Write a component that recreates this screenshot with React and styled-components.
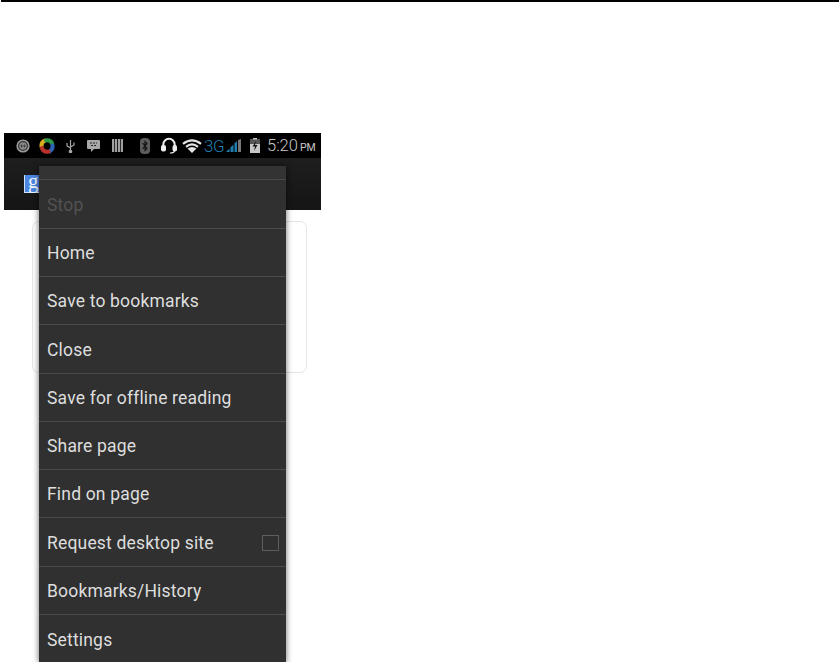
import React from "react";
import styled, { createGlobalStyle } from "styled-components";

const items = [
  { label: "Stop", disabled: true },
  { label: "Home" },
  { label: "Save to bookmarks" },
  { label: "Close" },
  { label: "Save for offline reading" },
  { label: "Share page" },
  { label: "Find on page" },
  { label: "Request desktop site", checkbox: true },
  { label: "Bookmarks/History" },
  { label: "Settings" },
];

const Global = createGlobalStyle`
  html, body {
    margin: 0;
    height: 662px;
    overflow: hidden;
    background: #fff;
    font-family: Roboto, "Liberation Sans", sans-serif;
  }
`;

const TopRule = styled.div`
  height: 2px;
  margin-left: 1px;
  background: #000;
`;

const Phone = styled.div`
  position: relative;
  width: 317px;
  margin: 131px 0 0 4px;
`;

const StatusBar = styled.div`
  height: 25px;
  background: #000;
  display: flex;
  align-items: center;
  color: #b4b4b4;
`;

const Slot = styled.span`
  position: relative;
  display: flex;
  align-items: center;
  justify-content: center;
  width: ${(p) => p.$w}px;
  margin-left: ${(p) => p.$gap || 0}px;
`;

const NetLabel = styled.span`
  font-size: 17px;
  font-weight: 300;
  color: #1f7db0;
  margin-left: 2px;
  width: 20px;
  letter-spacing: -0.4px;
  white-space: nowrap;
`;

const Clock = styled.span`
  font-size: 16.5px;
  font-weight: 300;
  color: #c8c8c8;
  margin-left: 7px;
  white-space: nowrap;
`;

const Meridiem = styled.span`
  font-size: 10.5px;
  font-weight: 400;
  margin-left: 2px;
`;

const Toolbar = styled.div`
  height: 52px;
  background: linear-gradient(#1e1e1e, #151515);
  display: flex;
  align-items: flex-start;
  padding: 17px 0 0 20px;
  box-sizing: border-box;
`;

const SearchBadge = styled.div`
  width: 16px;
  height: 18px;
  background: #4d86e0;
  color: #f2f6ff;
  font-family: "Liberation Serif", serif;
  font-size: 21px;
  line-height: 13px;
  padding-left: 3px;
  box-sizing: border-box;
  border-left: 1px solid #cfe0ff;
  border-bottom: 1px solid #cfe0ff;
`;

const Card = styled.div`
  width: 275px;
  height: 152px;
  margin: 11px 0 0 28px;
  box-sizing: border-box;
  border: 1px solid #e6e6e6;
  border-radius: 7px;
`;

const Menu = styled.div`
  position: absolute;
  left: 35px;
  top: 33px;
  width: 247px;
  background: #303030;
  border-radius: 2px 2px 0 0;
  box-shadow: 0 0 6px rgba(0, 0, 0, 0.6);
`;

const MenuCap = styled.div`
  height: 13px;
  background: #333;
  border-bottom: 1px solid #4a4a4a;
`;

const MenuList = styled.div`
  padding-top: 0.7px;
`;

const MenuRow = styled.div`
  height: 48.25px;
  box-sizing: border-box;
  border-bottom: 1px solid #4a4a4a;
  display: flex;
  align-items: center;
  justify-content: space-between;
  padding: 1px 7px 0 8px;
  font-size: 17.5px;
  letter-spacing: 0.18px;
  color: ${(p) => (p.$disabled ? "#525252" : "#dedede")};
  &:last-child {
    border-bottom: 0;
  }
`;

const Check = styled.span`
  width: 17px;
  height: 16px;
  box-sizing: border-box;
  border: 1px solid #5e5e5e;
`;

const Target = () => (
  <svg width="14" height="14" viewBox="0 0 14 14">
    <circle cx="7" cy="7" r="6.6" fill="#9a9a9a" />
    <circle cx="7" cy="7" r="5" fill="#333" />
    <circle cx="7" cy="7" r="3.8" fill="#8a8a8a" />
    <path d="M4.5 7H9.5M5.5 5.5V8.5M8.5 5.5V8.5" stroke="#333" strokeWidth="0.8" />
  </svg>
);

const Sync = () => (
  <svg width="16" height="16" viewBox="0 0 16 16" fill="none" strokeWidth="4" strokeLinecap="round">
    <path d="M2.5 8.5Q2 4 6 2.6" stroke="#d9ab1e" />
    <path d="M7 2.4Q12 2 13.3 6" stroke="#2f9a48" />
    <path d="M13.5 7.5Q14 11.5 10.5 13.4" stroke="#2b64b8" />
    <path d="M9.5 13.6Q4.5 14.5 2.8 10" stroke="#b8322a" />
  </svg>
);

const Usb = () => (
  <svg width="9" height="14" viewBox="0 0 9 14" fill="none" stroke="#a8a8a8" strokeWidth="1.2">
    <path d="M4.5 1V13M1 4V7L4.5 9M8 3.5V6L4.5 8" />
    <circle cx="4.5" cy="12.5" r="1.2" fill="#a8a8a8" />
  </svg>
);

const Chat = () => (
  <svg width="13" height="12" viewBox="0 0 13 12">
    <path d="M1 0H12Q13 0 13 1V8Q13 9 12 9H7L4 12V9H1Q0 9 0 8V1Q0 0 1 0Z" fill="#a8a8a8" />
    <path d="M3 3H5M6 3H8M9 3H10M4 5.5H6M7 5.5H9" stroke="#222" strokeWidth="1.2" />
  </svg>
);

const Bars = () => (
  <svg width="11" height="13" viewBox="0 0 11 13" fill="#a0a0a0">
    <rect x="0" width="2.2" height="13" />
    <rect x="2.9" width="2.2" height="13" />
    <rect x="5.9" width="2.2" height="13" />
    <rect x="8.8" width="2.2" height="13" />
  </svg>
);

const Bluetooth = () => (
  <svg width="10" height="16" viewBox="0 0 10 16">
    <rect width="10" height="16" rx="4" fill="#5c5c5c" />
    <path d="M2.5 5L7 10.5L5 12.5V3.5L7 5.5L2.5 11" fill="none" stroke="#111" strokeWidth="1.1" />
  </svg>
);

const Headset = () => (
  <svg width="16" height="17" viewBox="0 0 16 17" fill="none">
    <path d="M2.3 10V7.5A5.7 5.7 0 0 1 13.7 7.5V10" stroke="#eee" strokeWidth="2" />
    <rect x="0" y="8" width="5" height="6.5" rx="2" fill="#eee" />
    <rect x="11.5" y="8" width="4.5" height="6.5" rx="2" fill="#eee" />
    <path d="M13.5 14Q13 16 9 16" stroke="#eee" strokeWidth="1.2" />
  </svg>
);

const Wifi = () => (
  <svg width="20" height="14" viewBox="0 0 20 14" fill="none" stroke="#e4e4e4" strokeWidth="2.2">
    <path d="M1 4.8Q10 -2.2 19 4.8" />
    <path d="M4 7.8Q10 3 16 7.8" />
    <path d="M10 14L5.5 9.6Q10 6.5 14.5 9.6Z" fill="#e4e4e4" stroke="none" />
  </svg>
);

const Signal = () => (
  <svg width="15" height="13" viewBox="0 0 15 13">
    <path d="M0 13L3.5 9.5V13Z" fill="#1f7db0" />
    <path d="M4.5 13V8.5L7.5 5.5V13Z" fill="#1f7db0" />
    <path d="M8.5 13V4.5L11 2V13Z" fill="#1f7db0" />
    <path d="M12 13V1L15 0V13Z" fill="#777" />
  </svg>
);

const Battery = () => (
  <svg width="10" height="15" viewBox="0 0 10 15">
    <path d="M3 0H7V1.5H10V15H0V1.5H3Z" fill="#c8c8c8" />
    <path d="M0 1.5H10V6H0Z" fill="#555" />
    <path d="M6 3L2.5 8.5H5L4 13L7.5 7H5Z" fill="#111" />
  </svg>
);

export default function App() {
  return (
    <>
      <Global />
      <TopRule />
      <Phone>
        <StatusBar>
          <Slot $w={14} $gap={12}><Target /></Slot>
          <Slot $w={16} $gap={9}><Sync /></Slot>
          <Slot $w={9} $gap={11}><Usb /></Slot>
          <Slot $w={13} $gap={12}><Chat /></Slot>
          <Slot $w={11} $gap={12}><Bars /></Slot>
          <Slot $w={10} $gap={17}><Bluetooth /></Slot>
          <Slot $w={16} $gap={11}><Headset /></Slot>
          <Slot $w={20} $gap={5}><Wifi /></Slot>
          <NetLabel>3G</NetLabel>
          <Slot $w={15} $gap={2}><Signal /></Slot>
          <Slot $w={10} $gap={9}><Battery /></Slot>
          <Clock>5:20<Meridiem>PM</Meridiem></Clock>
        </StatusBar>
        <Toolbar>
          <SearchBadge>g</SearchBadge>
        </Toolbar>
        <Card />
        <Menu>
          <MenuCap />
          <MenuList>
            {items.map((item) => (
              <MenuRow key={item.label} $disabled={item.disabled}>
                {item.label}
                {item.checkbox && <Check />}
              </MenuRow>
            ))}
          </MenuList>
        </Menu>
      </Phone>
    </>
  );
}
